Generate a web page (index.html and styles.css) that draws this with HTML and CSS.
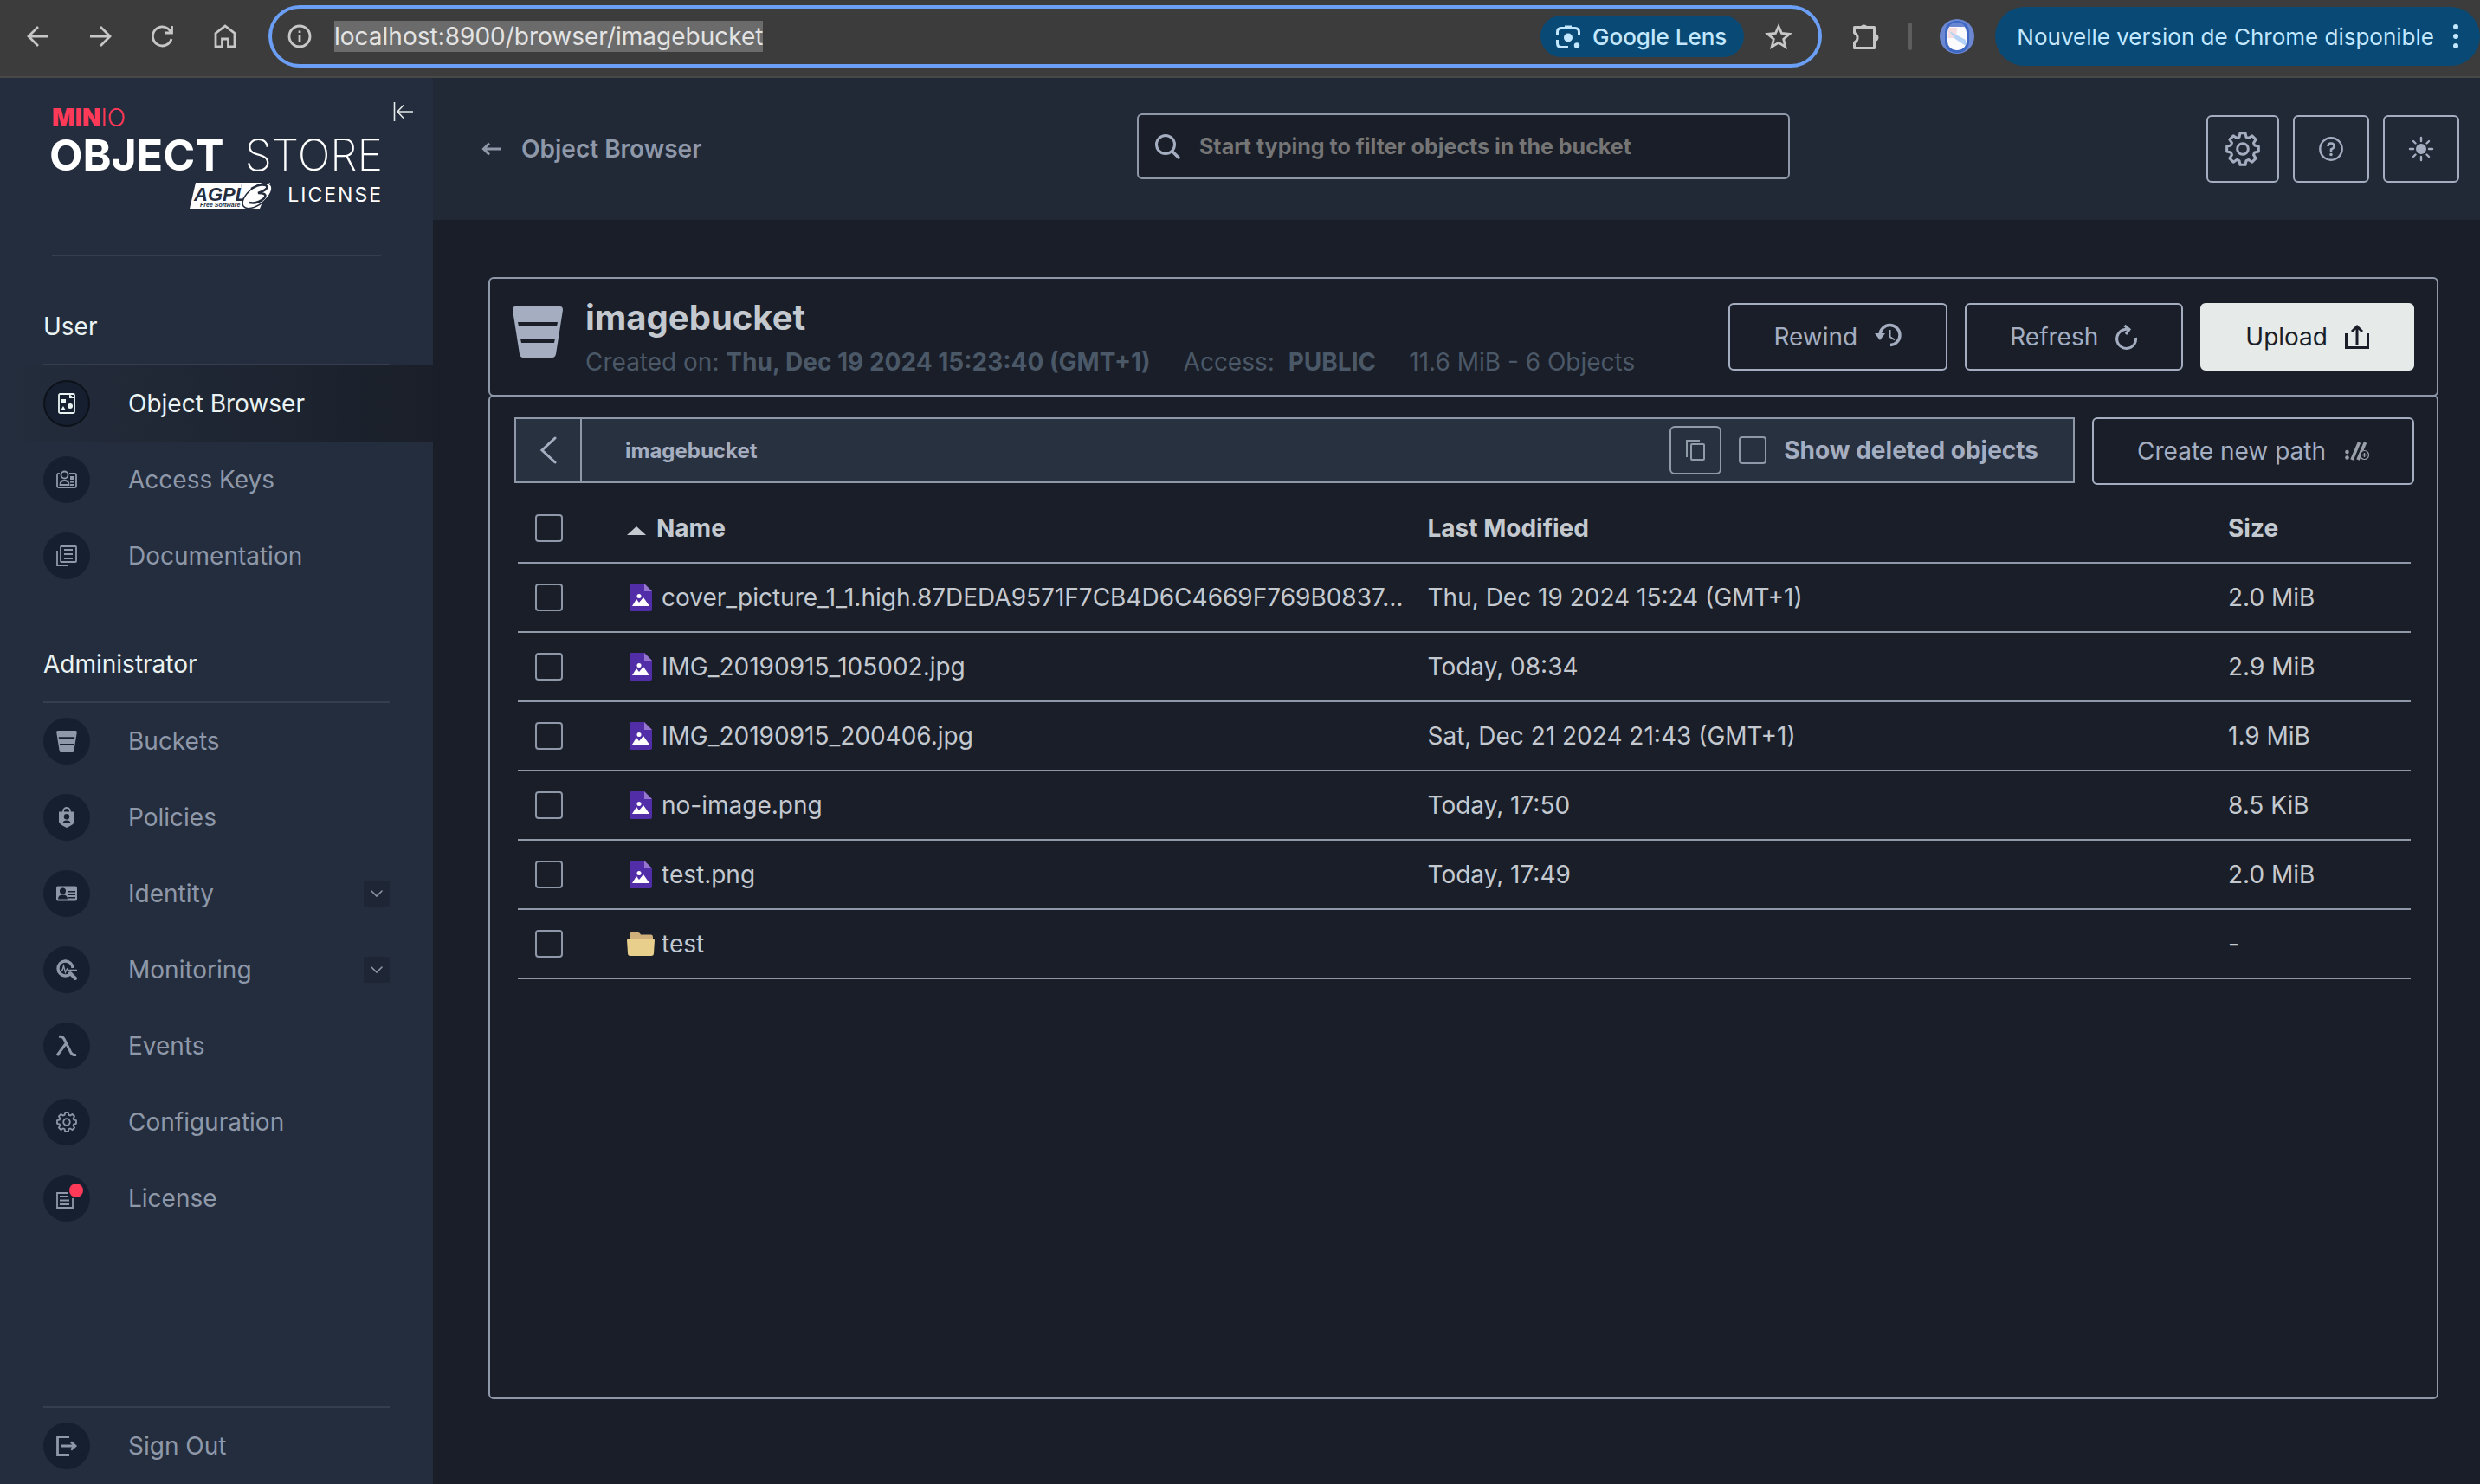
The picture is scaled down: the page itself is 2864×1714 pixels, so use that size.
FILE: index.html
```html
<!DOCTYPE html>
<html lang="en">
<head>
<meta charset="utf-8">
<meta name="viewport" content="width=device-width, initial-scale=1">
<title>MinIO Console</title>
<link rel="stylesheet" href="styles.css">
</head>
<body>
<svg class="sprite" aria-hidden="true">
  <symbol id="gear" viewBox="-12 -12 24 24"><path fill="none" stroke="currentColor" stroke-width="1.8" stroke-linejoin="round" d="M-2.4-8.2-1.8-11H1.8L2.4-8.2 4.1-7.5 6.5-9.1 9.1-6.5 7.5-4.1 8.2-2.4 11-1.8V1.8L8.2 2.4 7.5 4.1 9.1 6.5 6.5 9.1 4.1 7.5 2.4 8.2 1.8 11H-1.8L-2.4 8.2-4.1 7.5-6.5 9.1-9.1 6.5-7.5 4.1-8.2 2.4-11 1.8V-1.8L-8.2-2.4-7.5-4.1-9.1-6.5-6.5-9.1-4.1-7.5Z"/><circle r="3.8" fill="none" stroke="currentColor" stroke-width="1.8"/></symbol>
  <symbol id="bucket" viewBox="0 0 58 59"><path fill="currentColor" fill-rule="evenodd" d="M3 0H55Q58 0 58 4L50 55Q49 59 46 59H12Q9 59 8 55L0 4Q0 0 3 0ZM6 18 7 23H51L52 18ZM9 37 10 42H48L49 37Z"/></symbol>
  <symbol id="image-file" viewBox="0 0 26 32"><path fill="#512DA8" d="M2 0H17L26 9V30Q26 32 24 32H2Q0 32 0 30V2Q0 0 2 0Z"/><path fill="#9575CD" d="M17 0 26 9H17Z"/><path fill="#fff" d="M3 26 8 18 11 22 16 16 23 26Z"/><circle cx="11" cy="14.500" r="2.500" fill="#fff"/></symbol>
  <symbol id="chevron" viewBox="0 0 14 8"><path d="M1 1 7 7 13 1" fill="none" stroke="currentColor" stroke-width="1.600" stroke-linecap="round"/></symbol>
</svg>

<header class="browser-bar">
  <button class="bar-btn" aria-label="Back"><svg width="26" height="26" viewBox="0 0 26 26"><path d="M25 13H3M13 2 2 13 13 24" class="line"/></svg></button>
  <button class="bar-btn" aria-label="Forward"><svg width="26" height="26" viewBox="0 0 26 26"><path d="M1 13H23M13 2 24 13 13 24" class="line"/></svg></button>
  <button class="bar-btn" aria-label="Reload"><svg width="26" height="26" viewBox="0 0 26 26"><path d="M23 16A11 11 0 1 1 22 7.500M23.500 1V9H15.500" class="line"/></svg></button>
  <button class="bar-btn" aria-label="Home"><svg width="26" height="28" viewBox="0 0 26 28"><path d="M2 10.500 13 2 24 10.500V26H16.500V17H9.500V26H2Z" class="line"/></svg></button>
  <div class="address">
    <svg class="address-info" width="28" height="28" viewBox="0 0 28 28"><circle cx="14" cy="14" r="12" class="line"/><path d="M14 12.500V20M14 7.500V10" class="line"/></svg>
    <input class="url" type="text" aria-label="Address" value="localhost:8900/browser/imagebucket">
    <button class="lens"><svg width="28" height="28" viewBox="0 0 28 28"><path d="M1.500 12V9Q1.500 4.500 6 4.500H22Q26.500 4.500 26.500 9V12M1.500 18V22Q1.500 26.500 6 26.500H14M10 3H18" fill="none" stroke="#C2E7FF" stroke-width="3"/><circle cx="14" cy="15.500" r="5" fill="#C2E7FF"/><circle cx="24" cy="24.500" r="3.200" fill="#C2E7FF"/></svg>Google Lens</button>
    <button class="star" aria-label="Bookmark"><svg width="32" height="30" viewBox="0 0 32 30"><path d="M16 3.500 19.500 11.500 28.500 12.300 21.700 18.200 23.800 27 16 22.300 8.200 27 10.300 18.200 3.500 12.300 12.500 11.500Z" fill="none" stroke="#C7C7C7" stroke-width="2.800"/></svg></button>
  </div>
  <button class="ext" aria-label="Extensions"><svg width="34" height="34" viewBox="0 0 34 34"><path d="M3.500 6.500H26.500V30.500H3.500V24A6 6 0 0 0 3.500 13Z" fill="none" stroke="#C7C7C7" stroke-width="3" stroke-linejoin="round"/><path d="M10.500 6A4.500 4.500 0 0 1 18.500 6ZM27 14A4 4 0 0 1 27 23Z" fill="#C7C7C7"/></svg></button>
  <span class="bar-sep"></span>
  <button class="avatar" aria-label="Profile"><svg width="40" height="40" viewBox="0 0 40 40"><circle cx="20" cy="20" r="20" fill="#6B87D2"/><rect x="6" y="2" width="28" height="37" rx="13" fill="#3F68C2"/><rect x="9" y="5" width="22" height="31" rx="10" fill="#FBFAFC"/><path d="M10 10H20L19 22H9.500Z" fill="#F4DCE0"/><path d="M11 14 30 24V31L18 23Z" fill="#B4D2F5"/><path d="M11 9Q13 4 20 4T29 9Z" fill="#6B87D2"/></svg></button>
  <button class="update">Nouvelle version de Chrome disponible<svg width="6" height="30" viewBox="0 0 6 30"><circle cx="3" cy="4" r="3"/><circle cx="3" cy="15" r="3"/><circle cx="3" cy="26" r="3"/></svg></button>
</header>

<div class="app">
  <aside class="sidebar">
    <button class="collapse" aria-label="Collapse menu"><svg width="24" height="24" viewBox="0 0 24 24"><path d="M1.500 1V23M23 12H5M12 4.500 5 12 12 19.500" fill="none" stroke="#E4EAE9" stroke-width="1.600"/></svg></button>
    <div class="brand">
      <svg width="380" height="130" viewBox="0 0 380 130" role="img" aria-label="MinIO Object Store, AGPL v3 license">
        <text x="0" y="36" class="logo-min">MIN<tspan class="logo-io">IO</tspan></text>
        <text x="-3" y="87" class="logo-object">OBJECT</text>
        <text x="382" y="87" text-anchor="end" class="logo-store">STORE</text>
        <path d="M166 101H218L222 131H159Z" fill="#fff"/>
        <path d="M218 101H252L240 131H222Z" fill="#fff"/>
        <text x="164" y="122" class="logo-agpl">AGPL</text>
        <text x="171" y="129" class="logo-free">Free Software</text>
        <ellipse cx="237" cy="116" rx="20" ry="10" transform="rotate(-38 237 116)" fill="#fff" stroke="#242D3D" stroke-width="1.500"/>
        <path d="M230 108Q240 102 247 104 252 108 238 113 250 113 245 119 237 126 228 124" fill="none" stroke="#242D3D" stroke-width="2.500"/>
        <text x="382" y="123" text-anchor="end" class="logo-license">LICENSE</text>
      </svg>
    </div>
    <nav class="menu">
      <h2 class="menu-title">User</h2>
      <a class="menu-item active" href="#"><span class="dot"><svg width="24" height="24" viewBox="0 0 24 24"><rect x="3" y="1" width="18" height="22" rx="1.500" class="thin"/><path d="M15 1V6H21M5 7H11V12H5ZM5 20 8 15 11 20Z"/><circle cx="16" cy="15" r="3"/></svg></span>Object Browser</a>
      <a class="menu-item" href="#"><span class="dot"><svg width="24" height="24" viewBox="0 0 24 24"><path d="M4 5H2.500Q1 5 1 7V19.500Q1 21 2.500 21H21.500Q23 21 23 19.500V6.500Q23 5 21.500 5H15" class="thin"/><circle cx="9.500" cy="6.500" r="4" class="thin"/><path d="M4.500 18Q4.500 13 9.500 13T14.500 18Z" class="thin"/><path d="M16 8H21V12H16ZM16 13.500H21V15.500H16ZM16 17H21V19H16Z"/></svg></span>Access Keys</a>
      <a class="menu-item" href="#"><span class="dot"><svg width="24" height="24" viewBox="0 0 24 24"><rect x="5" y="1" width="18" height="18" rx="1" class="thin"/><path d="M1 6V23H14" class="thin"/><path d="M9 4H19V6H9ZM9 9H19V11H9ZM9 14H19V16H9Z"/></svg></span>Documentation</a>

      <h2 class="menu-title">Administrator</h2>
      <a class="menu-item" href="#"><span class="dot"><svg width="28" height="24"><use href="#bucket"/></svg></span>Buckets</a>
      <a class="menu-item" href="#"><span class="dot"><svg width="24" height="24" viewBox="0 0 24 24"><path d="M8 6V5A4 4 0 0 1 16 5V6" class="thin"/><path fill-rule="evenodd" d="M3 5.500H21V17Q21 20 12 24 3 20 3 17ZM12 8A3.200 3.200 0 1 0 12 14.400 3.200 3.200 0 1 0 12 8M7.500 18.500H16.500Q16 15.500 12 15.500T7.500 18.500"/></svg></span>Policies</a>
      <a class="menu-item" href="#"><span class="dot"><svg width="24" height="24" viewBox="0 0 24 24"><path fill-rule="evenodd" d="M2 3.500H22Q24 3.500 24 5.500V18.500Q24 20.500 22 20.500H2Q0 20.500 0 18.500V5.500Q0 3.500 2 3.500M7.500 5.500A3.500 3.500 0 1 0 7.500 12.500 3.500 3.500 0 1 0 7.500 5.500M2 18.500H13Q13 13.500 7.500 13.500T2 18.500M13 9V10.500H22V9ZM13 12.500V14H22V12.500ZM14 16V17.500H22V16Z"/></svg></span>Identity<span class="expand"><svg width="14" height="8"><use href="#chevron"/></svg></span></a>
      <a class="menu-item" href="#"><span class="dot"><svg width="24" height="24" viewBox="0 0 24 24"><path d="M19 10A8.500 8.500 0 1 0 10.500 19Q14 19 16.500 17" fill="none" stroke="currentColor" stroke-width="3.400"/><path d="M16 16 22 22" stroke="currentColor" stroke-width="4" stroke-linecap="round"/><path d="M5.500 12.500H7L8.500 7.500 10.500 15 12.500 11 14 12.500H24" fill="none" stroke="currentColor" stroke-width="1.400"/></svg></span>Monitoring<span class="expand"><svg width="14" height="8"><use href="#chevron"/></svg></span></a>
      <a class="menu-item" href="#"><span class="dot"><svg width="24" height="24" viewBox="0 0 24 24"><path d="M3 1.500Q7 .500 9 4L17 20Q18.500 23 23 22.500M11 9.500 1 23" fill="none" stroke="currentColor" stroke-width="3"/></svg></span>Events</a>
      <a class="menu-item" href="#"><span class="dot"><svg width="24" height="24"><use href="#gear"/></svg></span>Configuration</a>
      <a class="menu-item" href="#"><span class="dot"><svg width="24" height="24" viewBox="0 0 24 24"><path d="M14 6H1V23H19V12" class="thin"/><path d="M4 9H13V11H4ZM4 13.500H15V15.500H4ZM4 18H15V20H4Z"/></svg><span class="badge"></span></span>License</a>
    </nav>
    <div class="signout">
      <a class="menu-item" href="#"><span class="dot"><svg width="24" height="24" viewBox="0 0 24 24"><path d="M15 1.500H1.500V22.500H15M5 12H22M17 7.500 22 12 17 16.500" fill="none" stroke="currentColor" stroke-width="2.800"/></svg></span>Sign Out</a>
    </div>
  </aside>

  <main class="content">
    <div class="page-header">
      <a class="back-link" href="#"><svg width="22" height="16" viewBox="0 0 22 16"><path d="M22 8H3M9 1.500 2.500 8 9 14.500" fill="none" stroke="currentColor" stroke-width="3"/></svg>Object Browser</a>
      <label class="search"><svg width="30" height="30" viewBox="0 0 30 30"><circle cx="13" cy="13" r="10.500" fill="none" stroke="#A4AEC0" stroke-width="3"/><path d="M21 21 28 28" stroke="#A4AEC0" stroke-width="3.500" stroke-linecap="round"/></svg><input type="text" aria-label="Filter objects" placeholder="Start typing to filter objects in the bucket"></label>
      <div class="header-actions">
        <button class="icon-btn" aria-label="Settings"><svg width="40" height="40"><use href="#gear"/></svg></button>
        <button class="icon-btn wide" aria-label="Help"><svg width="28" height="28" viewBox="0 0 28 28"><circle cx="14" cy="14" r="12.700" fill="none" stroke="currentColor" stroke-width="2.400"/><path d="M10.500 11Q10.500 7.500 14 7.500T17.500 11Q17.500 13 14 14.500V17" fill="none" stroke="currentColor" stroke-width="2.600"/><circle cx="14" cy="20.500" r="1.800" fill="currentColor"/></svg></button>
        <button class="icon-btn wide" aria-label="Toggle theme"><svg width="28" height="28" viewBox="0 0 28 28"><circle cx="14" cy="14" r="6" fill="currentColor"/><path d="M14 1V5M14 23V27M1 14H5M23 14H27M5 5 7.500 7.500M20.500 20.500 23 23M23 5 20.500 7.500M7.500 20.500 5 23" stroke="currentColor" stroke-width="2.400" stroke-linecap="round"/></svg></button>
      </div>
    </div>

    <section class="bucket-head">
      <svg class="bucket-icon" width="58" height="59"><use href="#bucket"/></svg>
      <div class="bucket-info">
        <h1>imagebucket</h1>
        <p class="meta"><span>Created on: <b>Thu, Dec 19 2024 15:23:40 (GMT+1)</b></span><span>Access: <b class="access">PUBLIC</b></span><span>11.6 MiB - 6 Objects</span></p>
      </div>
      <div class="bucket-actions">
        <button class="btn">Rewind<svg width="32" height="28" viewBox="0 0 32 28"><path d="M6 12A11.500 11.500 0 1 1 18 23.500" fill="none" stroke="currentColor" stroke-width="3.400"/><path d="M0 10H12L6 18Z" fill="currentColor"/><path d="M17.500 6V14L23 17.500" fill="none" stroke="currentColor" stroke-width="2"/></svg></button>
        <button class="btn">Refresh<svg width="26" height="28" viewBox="0 0 26 28"><path d="M23.500 15A11 11 0 1 1 11 5.500L15 5" fill="none" stroke="currentColor" stroke-width="3"/><path d="M10.500 1 16 5.500 12 11" fill="none" stroke="currentColor" stroke-width="3"/></svg></button>
        <button class="btn primary">Upload<svg width="28" height="28" viewBox="0 0 28 28"><path d="M1.500 10V26.500H26.500V10M14 23V2.500M8 8 14 2 20 8" fill="none" stroke="currentColor" stroke-width="3"/></svg></button>
      </div>
    </section>

    <section class="bucket-body">
      <div class="toolbar">
        <div class="path">
          <button class="path-back" aria-label="Up one level"><svg width="20" height="32" viewBox="0 0 20 32"><path d="M18 2 3 16 18 30" fill="none" stroke="currentColor" stroke-width="3" stroke-linecap="round"/></svg></button>
          <span class="path-name">imagebucket</span>
          <button class="copy" aria-label="Copy path"><svg width="22" height="24" viewBox="0 0 22 24"><rect x="6" y="5" width="15" height="18" rx="1" class="copy-line"/><path d="M1 20V1H16" class="copy-line"/></svg></button>
          <label class="deleted"><input type="checkbox" class="check"><span>Show deleted objects</span></label>
        </div>
        <button class="btn create">Create new path<svg width="28" height="20" viewBox="0 0 28 20"><circle cx="2.500" cy="11" r="2.300" fill="#9AA0AA"/><circle cx="2.500" cy="17.500" r="2.300" fill="#9AA0AA"/><path d="M8 20 16.500 0M15 20 23.500 0" stroke="#9AA0AA" stroke-width="3.600"/><circle cx="22.500" cy="14.500" r="5" fill="#191E29" stroke="#9AA0AA" stroke-width="1.200"/><path d="M22.500 12V17M20 14.500H25" stroke="#9AA0AA" stroke-width="1.400"/></svg></button>
      </div>
      <table class="objects">
        <colgroup><col class="c-check"><col class="c-name"><col class="c-date"><col class="c-size"></colgroup>
        <thead>
          <tr><th><input type="checkbox" class="check" aria-label="Select all"></th><th><span class="sort"></span>Name</th><th>Last Modified</th><th>Size</th></tr>
        </thead>
        <tbody>
          <tr><td><input type="checkbox" class="check" aria-label="Select cover picture"></td><td><div class="name"><svg width="32" height="32"><use href="#image-file"/></svg><span>cover_picture_1_1.high.87DEDA9571F7CB4D6C4669F769B0837…</span></div></td><td>Thu, Dec 19 2024 15:24 (GMT+1)</td><td>2.0 MiB</td></tr>
          <tr><td><input type="checkbox" class="check" aria-label="Select IMG_20190915_105002.jpg"></td><td><div class="name"><svg width="32" height="32"><use href="#image-file"/></svg><span>IMG_20190915_105002.jpg</span></div></td><td>Today, 08:34</td><td>2.9 MiB</td></tr>
          <tr><td><input type="checkbox" class="check" aria-label="Select IMG_20190915_200406.jpg"></td><td><div class="name"><svg width="32" height="32"><use href="#image-file"/></svg><span>IMG_20190915_200406.jpg</span></div></td><td>Sat, Dec 21 2024 21:43 (GMT+1)</td><td>1.9 MiB</td></tr>
          <tr><td><input type="checkbox" class="check" aria-label="Select no-image.png"></td><td><div class="name"><svg width="32" height="32"><use href="#image-file"/></svg><span>no-image.png</span></div></td><td>Today, 17:50</td><td>8.5 KiB</td></tr>
          <tr><td><input type="checkbox" class="check" aria-label="Select test.png"></td><td><div class="name"><svg width="32" height="32"><use href="#image-file"/></svg><span>test.png</span></div></td><td>Today, 17:49</td><td>2.0 MiB</td></tr>
          <tr><td><input type="checkbox" class="check" aria-label="Select test"></td><td><div class="name"><svg width="32" height="32" viewBox="0 0 32 32"><path d="M3 10V5Q3 3 5 3H13Q15 3 16 5.500H28Q30 5.500 30 8V12H3Z" fill="#CFB07A"/><path d="M2 10H30Q32 10 32 12L31 27Q31 30 28 30H4Q1 30 1 27L0 12Q0 10 2 10Z" fill="#E8D08C"/></svg><span>test</span></div></td><td></td><td>-</td></tr>
        </tbody>
      </table>
    </section>
  </main>
</div>
</body>
</html>
```

FILE: styles.css
```css
:root {
  --bg: #191e29;
  --side: #242d3d;
  --line: #8e98a9;
  --btn: #a4aec0;
  --text: #c4c9d0;
  --muted: #8e98a9;
}

* { box-sizing: border-box; }

body {
  margin: 0;
  min-height: 100vh;
  display: flex;
  flex-direction: column;
  background: var(--bg);
  color: var(--text);
  font-family: Inter, "Liberation Sans", sans-serif;
  font-size: 28px;
}

button, input { font: inherit; color: inherit; }
button { padding: 0; border: 0; background: none; cursor: pointer; }
a { color: inherit; text-decoration: none; }
svg { flex: none; overflow: visible; }
.sprite { position: absolute; width: 0; height: 0; }

/* Browser bar */
.browser-bar {
  flex: none;
  display: flex;
  align-items: center;
  height: 90px;
  padding: 0 0 4px 8px;
  background: #3c3c3c;
  border-bottom: 2px solid #484848;
  font-size: 26px;
}
.bar-btn { width: 72px; height: 72px; display: grid; place-items: center; }
.line { fill: none; stroke: #c7c7c7; stroke-width: 2.8; }
.address {
  flex: 1;
  display: flex;
  align-items: center;
  height: 72px;
  margin-left: 14px;
  padding: 0 30px 0 18px;
  border: 4px solid #6a9ff5;
  border-radius: 36px;
}
.url {
  field-sizing: content;
  height: 36px;
  margin: 0 auto 0 26px;
  padding: 0;
  border: 0;
  outline: 0;
  background: #6b6b6b;
  color: #e3e3e3;
  font-size: 28px;
}
.lens {
  display: flex;
  align-items: center;
  gap: 14px;
  height: 48px;
  padding: 0 20px 0 18px;
  border-radius: 24px;
  background: #084a75;
  color: #c2e7ff;
  font-weight: 500;
}
.star { display: flex; margin-left: 24px; }
.ext { display: flex; margin-left: 34px; }
.bar-sep { width: 4px; height: 32px; margin: 0 32px; border-radius: 2px; background: #5e5e5e; }
.avatar { display: flex; }
.update {
  display: flex;
  align-items: center;
  gap: 22px;
  height: 68px;
  margin-left: 24px;
  padding: 0 25px;
  border-radius: 34px;
  background: #084a75;
  color: #c2e7ff;
}
.update svg { fill: #c2e7ff; }

/* Sidebar */
.app { flex: 1; display: flex; }
.sidebar {
  position: relative;
  flex: none;
  width: 500px;
  display: flex;
  flex-direction: column;
  background: var(--side);
}
.collapse { position: absolute; top: 27px; right: 22px; display: flex; }
.brand { margin: 20px 60px 0; padding-bottom: 54px; border-bottom: 2px solid #343e4e; }
.brand svg { display: block; }
.logo-min { font-size: 28px; font-weight: 900; fill: #ff3958; }
.logo-io { font-weight: 300; }
.logo-object { font-size: 50px; font-weight: 700; fill: #fff; }
.logo-store { font-size: 50px; font-weight: 200; fill: #fff; }
.logo-license { font-size: 23px; fill: #fff; letter-spacing: 2px; }
.logo-agpl { font: italic 700 22px "Liberation Sans", sans-serif; fill: #242d3d; }
.logo-free { font: italic 700 7px "Liberation Sans", sans-serif; fill: #242d3d; }

.menu-title {
  height: 90px;
  margin: 36px 50px 0;
  line-height: 90px;
  border-bottom: 2px solid #343e4e;
  color: #eaf3f2;
  font-size: 28px;
  font-weight: 400;
}
.menu-item {
  display: flex;
  align-items: center;
  height: 88px;
  padding: 0 50px;
  color: var(--muted);
}
.menu-item.active { color: #eaf3f2; background: linear-gradient(90deg, transparent, #1a1f29); }
.dot {
  position: relative;
  flex: none;
  display: grid;
  place-items: center;
  width: 54px;
  height: 54px;
  margin-right: 44px;
  border-radius: 50%;
  background: #161f2f;
}
.active .dot { border: 2px solid #0d121a; }
.dot svg { fill: currentColor; }
.thin, .dot .thin { fill: none; stroke: currentColor; stroke-width: 1.8; }
.badge { position: absolute; top: 10px; right: 8px; width: 16px; height: 16px; border-radius: 50%; background: #ff3958; }
.expand {
  display: grid;
  place-items: center;
  width: 30px;
  height: 30px;
  margin-left: auto;
  border-radius: 3px;
  background: #1e2535;
}
.signout { margin-top: auto; }
.signout::before { content: ""; display: block; height: 2px; margin: 0 50px; background: #343e4e; }

/* Content */
.content { flex: 1; min-width: 0; display: flex; flex-direction: column; padding-bottom: 98px; }
.page-header {
  display: grid;
  grid-template-columns: 1fr minmax(0, 754px) 1fr;
  align-items: center;
  height: 164px;
  padding: 0 24px 0 40px;
  background: #222936;
}
.back-link {
  display: flex;
  align-items: center;
  gap: 24px;
  margin-left: 16px;
  color: var(--muted);
  font-weight: 600;
}
.search {
  display: flex;
  align-items: center;
  gap: 22px;
  height: 76px;
  margin-bottom: 6px;
  padding: 0 18px;
  border: 2px solid var(--line);
  border-radius: 6px;
  background: var(--bg);
}
.search input { flex: 1; min-width: 0; padding: 0; border: 0; outline: 0; background: none; font-size: 25px; font-weight: 700; }
.search input::placeholder { color: #757575; opacity: 1; }
.header-actions { display: flex; justify-content: flex-end; gap: 16px; color: var(--btn); }
.icon-btn {
  display: grid;
  place-items: center;
  width: 84px;
  height: 78px;
  border: 2px solid var(--btn);
  border-radius: 6px;
}
.icon-btn.wide { width: 88px; }

.bucket-head {
  display: flex;
  align-items: center;
  height: 138px;
  margin: 66px 48px 0 64px;
  padding: 0 26px;
  border: 2px solid var(--line);
  border-radius: 6px;
}
.bucket-icon { color: var(--btn); margin-bottom: 12px; }
.bucket-info { margin-left: 26px; }
.bucket-info h1 { margin: 0; font-size: 40px; line-height: 50px; font-weight: 700; }
.meta { display: flex; gap: 38px; margin: 8px 0 0; line-height: 36px; color: #4b5867; }
.meta b { font-weight: 700; }
.meta .access { margin-left: 8px; }
.bucket-actions { display: flex; gap: 20px; margin-left: auto; }
.btn {
  display: flex;
  align-items: center;
  gap: 20px;
  height: 78px;
  padding: 0 50px;
  border: 2px solid var(--btn);
  border-radius: 6px;
  color: var(--btn);
  white-space: nowrap;
}
.btn.primary { border-color: #e6ebea; background: #e6ebea; color: #191e29; }
.btn.create { gap: 22px; }

.bucket-body {
  flex: 1;
  margin: -2px 48px 0 64px;
  padding: 24px 26px 24px 28px;
  border: 2px solid var(--line);
  border-radius: 6px;
}
.toolbar { display: flex; align-items: flex-start; gap: 20px; margin-bottom: 10px; }
.path {
  flex: 1;
  display: flex;
  align-items: center;
  height: 76px;
  padding-right: 40px;
  border: 2px solid var(--line);
  background: #283140;
  color: var(--btn);
}
.path-back { display: grid; place-items: center; width: 76px; height: 72px; border-right: 2px solid var(--line); }
.path-name { margin: 0 auto 0 50px; font-size: 24px; font-weight: 700; }
.copy { display: grid; place-items: center; width: 60px; height: 56px; border: 2px solid #8f9ba6; border-radius: 6px; }
.copy-line { fill: none; stroke: #8f9ba6; stroke-width: 2; }
.deleted { display: flex; align-items: center; gap: 20px; margin-left: 20px; font-weight: 700; }
.check {
  appearance: none;
  display: block;
  flex: none;
  width: 32px;
  height: 32px;
  margin: 0;
  border: 2px solid var(--line);
  border-radius: 4px;
}

.objects { width: calc(100% - 8px); margin: 0 4px; border-collapse: collapse; table-layout: fixed; }
.c-check { width: 126px; }
.c-size { width: 211px; }
.objects th, .objects td { height: 80px; padding: 0; border-bottom: 2px solid var(--line); text-align: left; white-space: nowrap; }
.objects th { font-weight: 700; }
.objects .check { margin-left: 20px; }
.sort {
  display: inline-block;
  margin: 0 12px 2px 0;
  border: 11px solid transparent;
  border-top: 0;
  border-bottom: 10px solid var(--text);
}
.name { display: flex; align-items: center; gap: 8px; padding-right: 16px; }
.name span { overflow: hidden; text-overflow: ellipsis; }
```
